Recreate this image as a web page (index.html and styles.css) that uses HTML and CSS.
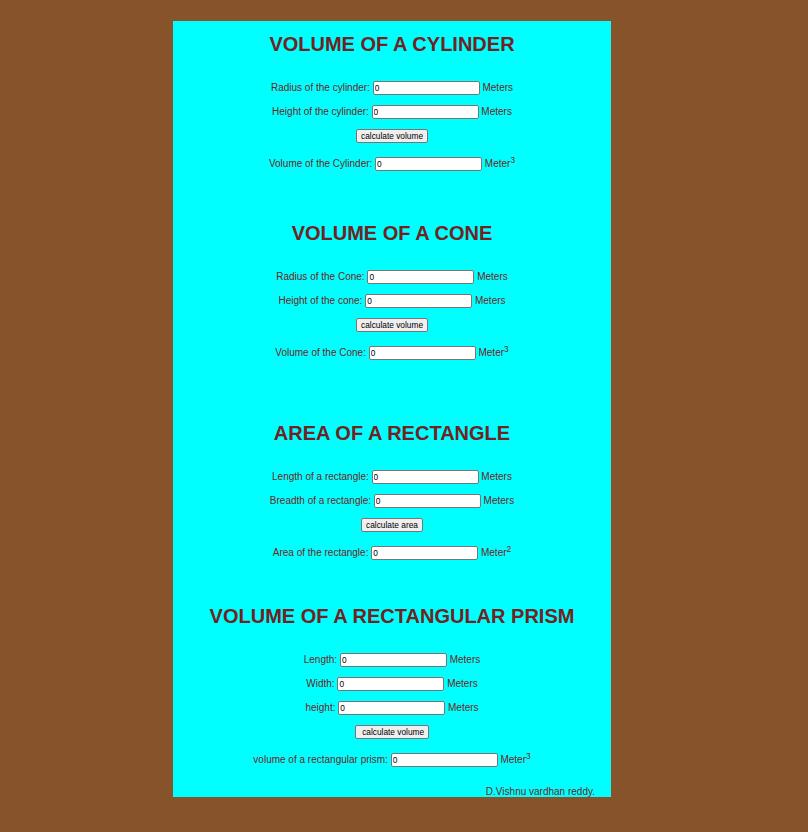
FILE: index.html
```html
<!DOCTYPE html>
<html lang="en">
<head>
<meta charset="utf-8">
<title>Volume and area calculator</title>
<link rel="stylesheet" href="styles.css">
</head>
<body>
<main class="panel">
  <form class="calc cylinder">
    <h1>VOLUME OF A CYLINDER</h1>
    <div class="row"><label for="cyl-r">Radius of the cylinder:</label> <input id="cyl-r" type="text" value="0"> Meters</div>
    <div class="row"><label for="cyl-h">Height of the cylinder:</label> <input id="cyl-h" type="text" value="0"> Meters</div>
    <div class="row action"><button type="button">calculate volume</button></div>
    <div class="row result"><label for="cyl-v">Volume of the Cylinder:</label> <input id="cyl-v" type="text" value="0"> Meter<sup>3</sup></div>
  </form>
  <form class="calc cone">
    <h1>VOLUME OF A CONE</h1>
    <div class="row"><label for="cone-r">Radius of the Cone:</label> <input id="cone-r" type="text" value="0"> Meters</div>
    <div class="row"><label for="cone-h">Height of the cone:</label> <input id="cone-h" type="text" value="0"> Meters</div>
    <div class="row action"><button type="button">calculate volume</button></div>
    <div class="row result"><label for="cone-v">Volume of the Cone:</label> <input id="cone-v" type="text" value="0"> Meter<sup>3</sup></div>
  </form>
  <form class="calc rectangle">
    <h1>AREA OF A RECTANGLE</h1>
    <div class="row"><label for="rect-l">Length of a rectangle:</label> <input id="rect-l" type="text" value="0"> Meters</div>
    <div class="row"><label for="rect-b">Breadth of a rectangle:</label> <input id="rect-b" type="text" value="0"> Meters</div>
    <div class="row action"><button type="button">calculate area</button></div>
    <div class="row result"><label for="rect-a">Area of the rectangle:</label> <input id="rect-a" type="text" value="0"> Meter<sup>2</sup></div>
  </form>
  <form class="calc prism">
    <h1>VOLUME OF A RECTANGULAR PRISM</h1>
    <div class="row"><label for="pr-l">Length:</label> <input id="pr-l" type="text" value="0"> Meters</div>
    <div class="row"><label for="pr-w">Width:</label> <input id="pr-w" type="text" value="0"> Meters</div>
    <div class="row"><label for="pr-h">height:</label> <input id="pr-h" type="text" value="0"> Meters</div>
    <div class="row action"><button type="button">&nbsp;calculate volume</button></div>
    <div class="row result"><label for="pr-v">volume of a rectangular prism:</label> <input id="pr-v" type="text" value="0"> Meter<sup>3</sup></div>
  </form>
  <footer class="credit">D.Vishnu vardhan reddy.</footer>
</main>
</body>
</html>
```

FILE: styles.css
```css
* {
  box-sizing: border-box;
}

body {
  margin: 0;
  padding: 21px 197px 35px 173px;
  background: #87532a;
  color: #722222;
  font: 10px/12px "Liberation Sans", Arial, sans-serif;
}

.panel {
  padding-top: 11px;
  background: cyan;
  text-align: center;
}

h1 {
  margin: 0 0 25px;
  font-size: 20px;
  line-height: 24px;
}

.row {
  height: 12px;
  margin-bottom: 12px;
  white-space: nowrap;
}

.action {
  margin-bottom: 16px;
}

.result {
  margin-bottom: 0;
}

input {
  width: 107px;
  height: 14px;
  padding: 0 1px;
  border: 1px solid #767676;
  border-radius: 2px;
  background: white;
  color: black;
  font: smaller/12px "Liberation Sans", Arial, sans-serif;
}

button {
  height: 14px;
  padding: 0 4px;
  border: 1px solid #767676;
  border-radius: 2px;
  background: #efefef;
  color: black;
  font: smaller/12px "Liberation Sans", Arial, sans-serif;
}

sup {
  font-size: smaller;
  line-height: 0;
}

.cylinder {
  margin-bottom: 52px;
}

.cone {
  margin-bottom: 63px;
}

.rectangle {
  margin-bottom: 46px;
}

.credit {
  margin-top: 21px;
  padding-right: 16px;
  line-height: 11px;
  text-align: right;
}
```
